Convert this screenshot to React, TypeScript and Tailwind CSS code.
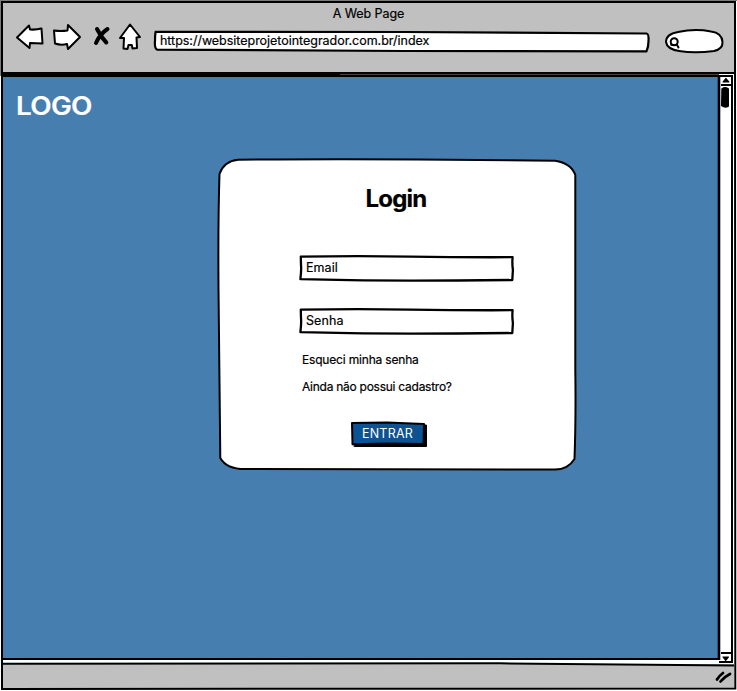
import React from "react";

type OutlineProps = { w: number; h: number; d: string; stroke?: number; fill?: string };

/* Hand-drawn pen line that sits over the box which contains it. */
function Outline({ w, h, d, stroke = 2, fill = "none" }: OutlineProps) {
  return (
    <svg
      className="pointer-events-none absolute left-0 top-0 overflow-visible"
      width={w}
      height={h}
      viewBox={`0 0 ${w} ${h}`}
      fill={fill}
      stroke="#000"
      strokeWidth={stroke}
      strokeLinecap="round"
      strokeLinejoin="round"
      aria-hidden="true"
    >
      <path d={d} />
    </svg>
  );
}

function NavIcons() {
  return (
    <svg className="shrink-0" width="130" height="30" viewBox="14 22 130 30" fill="#fff" stroke="#000" strokeWidth="2" strokeLinejoin="round" strokeLinecap="round" aria-hidden="true">
      <path d="M17 37.5 L29 25.5 L30 29.5 Q36 30 41.5 28.5 L42.5 43.5 L30 43 L29.5 48 Z" />
      <path d="M54 30.5 Q61 31.5 67.5 30.5 L68 25 L80 37 L68 49 L67 44 Q61 45.5 55 43.5 Z" />
      <path d="M97 29 Q101 37 106.3 42.5 M107.5 29 Q100 34 96 43" strokeWidth="4" />
      <path d="M130 24.5 L140 37 L136.5 37.5 L137 48 L132.5 48.5 L131.8 45 L128.5 45 L127.5 49 L123.5 48.5 L124 38 L120 38 Z" />
    </svg>
  );
}

function Field({ label }: { label: string }) {
  return (
    <div className="relative flex h-[26px] w-[214px] items-center bg-white pb-[2px] pl-[6px] text-[12.5px]">
      <span className="relative tracking-[0.08px]">{label}</span>
      <Outline w={214} h={26} stroke={2.3} d="M0.8 0.6 Q60 -0.2 110 0.6 T212.6 1.2 Q212 8 212.9 14 L212.3 24 Q110 25 50 24.2 L0.4 23.2 Q1.5 14 1 9 Z" />
    </div>
  );
}

export default function App() {
  return (
    <div className="relative flex h-[691px] w-[737px] flex-col overflow-hidden bg-white pl-[3px] pr-[3px] pt-[2px] font-['Inter','Liberation_Sans',sans-serif] text-black [-webkit-text-stroke:0.2px]">
      <header className="flex h-[71px] shrink-0 flex-col bg-[#c0c0c0]">
        <div className="flex h-[23px] items-center justify-center pt-[2px] text-[12.5px] leading-none">
          <span className="tracking-[-0.08px]">A Web Page</span>
        </div>
        <div className="flex h-[34px] items-start pl-[11px]">
          <div className="-mt-[3px]">
            <NavIcons />
          </div>
          <div className="relative ml-[10px] mt-[6px] flex h-[21px] w-[496px] items-center pb-px pl-[6px] text-[12.5px]">
            <Outline w={496} h={21} fill="#fff" stroke={2.2} d="M1.6 0.8 Q150 0.5 250 1 L492.5 2.5 Q495 3 494.5 10 Q494.5 16 492.5 20.3 L250 20 L3 18.6 Q0.3 17 1 10 Q1 4 1.6 0.8 Z" />
            <span className="relative whitespace-nowrap tracking-[-0.03px]">https://websiteprojetointegrador.com.br/index</span>
          </div>
          <div className="relative ml-[15px] mt-[4px] h-[24px] w-[60px]">
            <Outline w={60} h={24} fill="#fff" d="M13 3 Q30 -0.5 46 2.5 Q57 4 57.5 13 Q58 20 49 22 Q30 24.5 14 22 Q2 20 1 13 Q1 5 13 3 Z" />
            <svg className="absolute left-[4px] top-[8px]" width="13" height="13" fill="none" stroke="#000" strokeWidth="2" strokeLinecap="round" aria-hidden="true">
              <circle cx="5.2" cy="4.8" r="3.5" />
              <path d="M2.2 7.8 L5 8 M7.8 7.5 L9.5 10.5" />
            </svg>
          </div>
        </div>
      </header>

      <div className="flex h-[586px] shrink-0 pt-[3px]">
        <main className="flex h-[584px] w-[716px] flex-col bg-[#477eb0] pt-[15px]">
          <div className="flex h-[30px] items-center pl-[13px] text-[25px] font-semibold leading-none text-white">
            <span className="origin-left scale-x-[1.11] tracking-[-0.6px]">LOGO</span>
          </div>
          <section className="relative ml-[215px] mt-[38px] flex h-[312px] w-[358px] shrink-0 flex-col pl-[82px]">
            <Outline w={358} h={312} fill="#fff" d="M20 0.7 Q100 -0.2 200 0.4 L337 1.7 Q353 4 357.3 16 L357.3 210 Q358 260 356.5 300 Q350 310.5 337 310.5 Q180 310.5 30 310 Q9 311 2.3 299 Q1 210 0.5 130 Q0 60 1.5 15 Q6 2 20 0.7 Z" />
            <h1 className="relative ml-[-82px] mt-[26px] h-[28px] text-center text-[24px] font-bold leading-[28px] tracking-[-0.8px]">
              <span className="mr-[2px]">Login</span>
            </h1>
            <div className="relative mt-[43px] flex flex-col gap-[27px]">
              <Field label="Email" />
              <Field label="Senha" />
            </div>
            <a className="relative mt-[16px] h-[18px] pl-[2px] text-[12px] leading-[18px] tracking-[-0.18px]">Esqueci minha senha</a>
            <a className="relative mt-[9px] h-[18px] pl-[2px] text-[12px] leading-[18px] tracking-[-0.26px]">Ainda não possui cadastro?</a>
            <button className="relative ml-[51px] mt-[26px] flex h-[25px] w-[76px] items-center justify-center pb-px pr-[3px] text-[12.5px] text-white [-webkit-text-stroke:0px]">
              <Outline w={76} h={25} fill="#000" stroke={1} d="M3 4 L75.5 3 L75.5 24.5 L3.5 24.5 Z" />
              <Outline w={76} h={25} fill="#0b5394" stroke={2} d="M1 0.9 L36 0.6 L73 2 L72.5 22 L37 21.5 L1.5 22.3 Z" />
              <span className="relative tracking-[0.25px]">ENTRAR</span>
            </button>
          </section>
        </main>
        <aside className="relative flex h-[586px] w-[13px] flex-col items-center bg-white">
          <svg width="15" height="586" viewBox="718 76 15 586" fill="none" stroke="#000" strokeWidth="2" strokeLinejoin="round" aria-hidden="true">
            <path d="M721 85 L731 85 M721 653 L731 653" />
            <path d="M723 82 L725.8 78.5 L728.8 82 Z M723 657 L728.5 657 L725.7 660.5 Z" fill="#000" strokeWidth="1.2" />
            <path d="M722.3 89 Q725 87 728 89 L728 106 Q725 107.5 722 105.5 Z" fill="#000" />
          </svg>
        </aside>
      </div>

      <footer className="mt-[5px] flex h-[24px] shrink-0 items-center justify-end bg-[#c0c0c0] pr-px">
        <svg width="18" height="16" viewBox="714 670 18 16" fill="none" stroke="#000" strokeWidth="2.8" strokeLinecap="round" aria-hidden="true">
          <path d="M716 681.5 Q718 678 722 675 M719.5 683.5 Q723 679 729 676" />
        </svg>
      </footer>

      {/* Pen strokes of the browser window */}
      <svg className="pointer-events-none absolute left-0 top-0" width="737" height="691" fill="none" stroke="#000" strokeWidth="2" aria-hidden="true">
        <path d="M0 .5 H737 M.5 0 V76" stroke="#777c77" strokeWidth="1" />
        <path d="M2 2 H735 L735.3 688.5 Q350 690 2 689 Q3 350 2 2 Z" />
        <path d="M3 73 H734 M3 76 H719" />
        <path d="M3 74.5 H340" strokeWidth="1" />
        <path d="M340 74.5 H719" strokeWidth="1" stroke="#444" />
        <path d="M3 659 H720 M3 663.8 L500 663.3 L734 665.5" />
        <path d="M719 76 L719 660" strokeWidth="2.6" />
        <path d="M732 76 V662 H719 M719 76 H733" />
      </svg>
    </div>
  );
}
